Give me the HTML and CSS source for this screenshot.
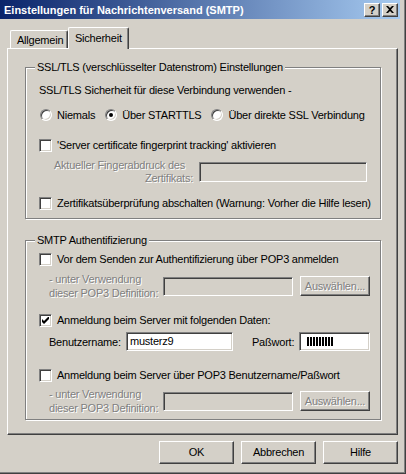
FILE: index.html
```html
<!DOCTYPE html>
<html lang="de">
<head>
  <meta charset="UTF-8" />
  <title>Einstellungen für Nachrichtenversand (SMTP)</title>
  <link rel="stylesheet" href="styles.css">
</head>
<body>
  <div class="window">
    <!-- Titelleiste -->
    <div class="titlebar">
      <span class="title">Einstellungen für Nachrichtenversand (SMTP)</span>
      <div class="caption-buttons">
        <span class="cap-btn help">?</span>
        <span class="cap-btn close">
          <svg width="8" height="7" viewBox="0 0 8 7"><path d="M0 0h2l2 2 2-2h2L5 3.5 8 7H6L4 5 2 7H0l3-3.5z" fill="#000"/></svg>
        </span>
      </div>
    </div>

    <div class="client">
      <div class="tabs">
        <span class="tab">Allgemein</span>
        <span class="tab active">Sicherheit</span>
      </div>

      <div class="panel">
        <fieldset class="group">
          <legend>SSL/TLS (verschlüsselter Datenstrom) Einstellungen</legend>
          <div class="intro">SSL/TLS Sicherheit für diese Verbindung verwenden -</div>
          <div class="radios">
            <span class="option"><span class="radio"></span>Niemals</span>
            <span class="option"><span class="radio checked"></span>Über STARTTLS</span>
            <span class="option"><span class="radio"></span>Über direkte SSL Verbindung</span>
          </div>
          <div class="check-row fp-check">
            <span class="checkbox"></span>'Server certificate fingerprint tracking' aktivieren
          </div>
          <div class="field-row fp-row">
            <span class="fp-label disabled">
              <span class="first">Aktueller Fingerabdruck des</span>
              <span>Zertifikats:</span>
            </span>
            <span class="edit off fp-edit"></span>
          </div>
          <div class="check-row no-verify">
            <span class="checkbox"></span>Zertifikatsüberprüfung abschalten (Warnung: Vorher die Hilfe lesen)
          </div>
        </fieldset>

        <fieldset class="group auth">
          <legend>SMTP Authentifizierung</legend>
          <div class="check-row pop-before">
            <span class="checkbox"></span>Vor dem Senden zur Authentifizierung über POP3 anmelden
          </div>
          <div class="field-row sub-row first-sub">
            <span class="sub-label disabled">- unter Verwendung<br>dieser POP3 Definition:</span>
            <span class="edit off pop-edit"></span>
            <span class="btn small off">Auswählen...</span>
          </div>
          <div class="check-row login">
            <span class="checkbox"><svg width="7" height="7" viewBox="0 0 7 7"><path d="M0 2l2 2 5-5v3L2 7 0 5z" fill="#000"/></svg></span>Anmeldung beim Server mit folgenden Daten:
          </div>
          <div class="field-row user-row">
            <span class="user-label">Benutzername:</span>
            <span class="edit user-edit">musterz9</span>
            <span class="pass-label">Paßwort:</span>
            <span class="edit pass-edit"><span class="mask"></span></span>
          </div>
          <div class="check-row pop-login">
            <span class="checkbox"></span>Anmeldung beim Server über POP3 Benutzername/Paßwort
          </div>
          <div class="field-row sub-row second-sub">
            <span class="sub-label disabled">- unter Verwendung<br>dieser POP3 Definition:</span>
            <span class="edit off pop-edit"></span>
            <span class="btn small off">Auswählen...</span>
          </div>
        </fieldset>
      </div>

      <div class="buttons">
        <span class="btn">OK</span>
        <span class="btn">Abbrechen</span>
        <span class="btn">Hilfe</span>
      </div>
    </div>
  </div>
</body>
</html>
```

FILE: styles.css
```css
body {
  margin: 0;
  background: #d4d0c8;
  font-family: "Liberation Sans", Arial, sans-serif;
  font-size: 11px;
  letter-spacing: -0.22px;
  color: #000;
}
.window {
  width: 406px;
  height: 474px;
  box-sizing: border-box;
  border-right: 1px solid #404040;
  border-bottom: 1px solid #404040;
  box-shadow: inset -1px -1px 0 #808080;
}

/* Titelleiste mit Verlauf */
.titlebar {
  width: 400px;
  height: 19px;
  box-sizing: border-box;
  padding: 0 2px 0 4px;
  display: flex;
  align-items: center;
  justify-content: space-between;
  background: linear-gradient(to right, #0a246a, #a6caf0);
}
.title {
  color: #fff;
  font-weight: bold;
  font-size: 11px;
  letter-spacing: 0;
}
.caption-buttons {
  display: flex;
  gap: 2px;
}
.cap-btn {
  width: 16px;
  height: 14px;
  box-sizing: border-box;
  background: #d4d0c8;
  border: 1px solid;
  border-color: #fff #404040 #404040 #fff;
  box-shadow: inset -1px -1px 0 #808080;
  display: flex;
  align-items: center;
  justify-content: center;
}
.cap-btn.help {
  font-weight: bold;
  font-size: 11px;
  line-height: 12px;
}

.client {
  padding: 8px 0 0 7px;
}

/* Registerkarten */
.tabs {
  display: flex;
  align-items: flex-end;
  height: 21px;
  margin-left: 3px;
  position: relative;
  z-index: 1;
}
.tab {
  flex: none;
  width: 58px;
  height: 18px;
  box-sizing: border-box;
  padding: 3px 0 0 6px;
  line-height: 13px;
  white-space: nowrap;
  background: #d4d0c8;
  border: 1px solid #fff;
  border-bottom: 0;
  border-right-color: #404040;
  border-radius: 2px 2px 0 0;
  box-shadow: inset -1px 0 0 #808080;
}
.tab.active {
  width: 61px;
  height: 22px;
  padding-top: 4px;
  margin-bottom: -1px;
}

.panel {
  width: 391px;
  height: 387px;
  box-sizing: border-box;
  padding: 12px 0 0 17px;
  border: 1px solid #404040;
  border-top-color: #fff;
  border-left-color: #fff;
  box-shadow: inset -1px -1px 0 #808080;
}

/* Gruppenrahmen (geätzt) */
.group {
  width: 356px;
  box-sizing: border-box;
  margin: 0;
  padding: 0 0 8px 13px;
  min-width: 0;
  border: 1px solid #808080;
  box-shadow: inset 1px 1px 0 #fff, 1px 1px 0 #fff;
}
.group legend {
  margin-left: -4px;
  padding: 0 2px;
  line-height: 13px;
  background: #d4d0c8;
}
.group.auth {
  margin-top: 15px;
}

.intro {
  margin-top: 9px;
  line-height: 14px;
}
.radios {
  margin-top: 11px;
  height: 14px;
  padding-left: 1px;
  display: flex;
  align-items: center;
  gap: 10px;
}
.option {
  display: flex;
  align-items: center;
  white-space: nowrap;
}
.radio {
  flex: none;
  width: 12px;
  height: 12px;
  box-sizing: border-box;
  margin-right: 5px;
  border-radius: 50%;
  background: #fff;
  border: 1px solid;
  border-color: #808080 #fff #fff #808080;
  box-shadow: inset 1px 1px 0 #404040, inset -1px -1px 0 #d4d0c8;
  display: flex;
  align-items: center;
  justify-content: center;
}
.radio.checked::after {
  content: "";
  width: 4px;
  height: 4px;
  border-radius: 50%;
  background: #000;
}

.check-row {
  height: 14px;
  display: flex;
  align-items: center;
  white-space: nowrap;
}
.checkbox {
  flex: none;
  width: 13px;
  height: 13px;
  box-sizing: border-box;
  margin-right: 5px;
  background: #fff;
  border: 1px solid;
  border-color: #808080 #fff #fff #808080;
  box-shadow: inset 1px 1px 0 #404040, inset -1px -1px 0 #d4d0c8;
  display: flex;
  align-items: center;
  justify-content: center;
}
.fp-check { margin-top: 16px; }
.no-verify { margin-top: 14px; }
.pop-before { margin-top: 5px; }
.login { margin-top: 17px; }
.pop-login { margin-top: 17px; }

.field-row {
  display: flex;
  align-items: center;
  height: 20px;
  white-space: nowrap;
}
.field-row > * {
  flex: none;
}
.fp-row { margin-top: 10px; }
.first-sub { margin-top: 10px; }
.second-sub { margin-top: 9px; }
.user-row {
  margin-top: 5px;
  height: 19px;
}

.disabled {
  color: #808080;
  text-shadow: 1px 1px 0 #fff;
}
.fp-label {
  width: 154px;
  text-align: right;
  line-height: 13px;
}
.fp-label span {
  display: block;
}
.fp-label .first {
  padding-right: 8px;
}
.sub-label {
  width: 124px;
  padding-left: 10px;
  box-sizing: border-box;
  line-height: 14px;
}
.user-label {
  width: 87px;
  padding-left: 10px;
  box-sizing: border-box;
}
.pass-label {
  width: 47px;
  margin-left: 19px;
}

/* Eingabefelder (versenkt) */
.edit {
  box-sizing: border-box;
  height: 19px;
  padding: 0 3px;
  line-height: 15px;
  background: #fff;
  border: 1px solid;
  border-color: #808080 #fff #fff #808080;
  box-shadow: inset 1px 1px 0 #404040, inset -1px -1px 0 #d4d0c8;
  display: flex;
  align-items: center;
}
.edit.off {
  background: #d4d0c8;
}
.fp-edit {
  width: 168px;
  height: 20px;
  margin-left: 6px;
}
.pop-edit {
  width: 130px;
}
.user-edit {
  width: 107px;
}
.pass-edit {
  width: 71px;
  padding-left: 7px;
}
.mask {
  width: 26px;
  height: 9px;
  background: repeating-linear-gradient(to right, #000 0 2px, transparent 2px 3px);
}

/* Schaltflächen */
.btn {
  width: 75px;
  height: 23px;
  box-sizing: border-box;
  text-align: center;
  line-height: 21px;
  background: #d4d0c8;
  border: 1px solid;
  border-color: #fff #404040 #404040 #fff;
  box-shadow: inset -1px -1px 0 #808080;
}
.btn.small {
  width: 70px;
  height: 20px;
  line-height: 18px;
  margin-left: 7px;
}
.btn.off {
  color: #808080;
  text-shadow: 1px 1px 0 #fff;
}
.buttons {
  width: 391px;
  margin-top: 6px;
  display: flex;
  justify-content: flex-end;
  gap: 7px;
}
```
